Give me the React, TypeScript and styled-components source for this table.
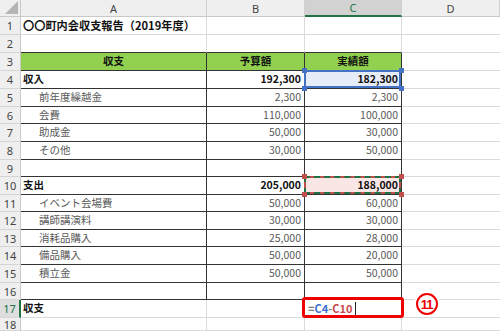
import React from "react";
import styled, { createGlobalStyle, css } from "styled-components";

const GlobalStyle = createGlobalStyle`
  html, body { margin: 0; padding: 0; background: #ffffff; overflow: hidden; }
  body { font-family: "Noto Sans CJK JP", "Noto Sans", sans-serif; }
`;

type Line = "grid" | "table" | "none";
type Mark = "none" | "blue" | "red" | "edit";

const ROW_HEIGHTS = [18, 18, 18, 18, 18, 17, 18, 18, 17, 18, 17, 18, 17, 18, 18, 17, 18, 13];

const Sheet = styled.div`
  display: grid;
  grid-template-columns: 21px 186px 98px 97px 1fr;
  width: 500px;
  height: 331px;
  overflow: hidden;
  background: #fff;
`;

const Corner = styled.div`
  height: 17px;
  background: #efefef;
  border-right: 1px solid #c9c9c9;
  border-bottom: 1px solid #c9c9c9;
  box-sizing: border-box;
  display: flex;
  align-items: flex-end;
  justify-content: flex-end;
  padding: 0 2px 2px 0;
`;

const ColHead = styled.div<{ $active?: boolean }>`
  height: 17px;
  box-sizing: border-box;
  display: flex;
  align-items: center;
  justify-content: center;
  font-family: "Noto Sans", "Open Sans", sans-serif;
  font-size: 11px;
  color: ${(p) => (p.$active ? "#217346" : "#444444")};
  background: ${(p) => (p.$active ? "#d2d2d2" : "#efefef")};
  border-right: 1px solid #d0d0d0;
  border-bottom: ${(p) => (p.$active ? "2px solid #217346" : "1px solid #c9c9c9")};
`;

const RowHead = styled.div<{ $active?: boolean }>`
  box-sizing: border-box;
  display: flex;
  align-items: center;
  justify-content: center;
  font-family: "Noto Sans", "Open Sans", sans-serif;
  font-size: 11px;
  color: ${(p) => (p.$active ? "#217346" : "#444444")};
  background: ${(p) => (p.$active ? "#dedede" : "#efefef")};
  border-bottom: 1px solid #d5d5d5;
  border-right: ${(p) => (p.$active ? "2px solid #217346" : "1px solid #c9c9c9")};
`;

const lineColor = (l: Line) =>
  l === "table" ? "1px solid #333333" : l === "grid" ? "1px solid #dadada" : "none";

const Cell = styled.div<{
  $bb: Line;
  $br: Line;
  $align: "left" | "center" | "right";
  $fill?: string;
  $bold?: boolean;
  $muted?: boolean;
  $indent?: boolean;
  $large?: boolean;
}>`
  position: relative;
  box-sizing: border-box;
  display: flex;
  align-items: center;
  justify-content: ${(p) =>
    p.$align === "right" ? "flex-end" : p.$align === "center" ? "center" : "flex-start"};
  padding: 0 ${(p) => (p.$align === "right" ? "3px" : "2px")} 0
    ${(p) => (p.$indent ? "18px" : "2px")};
  border-bottom: ${(p) => lineColor(p.$bb)};
  border-right: ${(p) => lineColor(p.$br)};
  background: ${(p) => p.$fill || "transparent"};
  font-size: ${(p) => (p.$large ? "11.2px" : "10.5px")};
  font-weight: ${(p) => (p.$bold ? 700 : 400)};
  color: ${(p) => (p.$muted ? "#595959" : "#111111")};
  white-space: nowrap;
  overflow: visible;
`;

const Text = styled.span`
  position: relative;
  z-index: 2;
  line-height: 1;
`;

const Handle = styled.span<{ $c: string; $pos: string }>`
  position: absolute;
  width: 5px;
  height: 5px;
  background: ${(p) => p.$c};
  z-index: 3;
  ${(p) => {
    const [v, h] = p.$pos.split("-");
    return css`
      ${v}: -3px;
      ${h}: -3px;
    `;
  }}
`;

const RefFrame = styled.span<{ $c: string; $dashed?: boolean }>`
  position: absolute;
  inset: -1px 0 0 -1px;
  border: 2px solid ${(p) => p.$c};
  z-index: 1;
  pointer-events: none;
  ${(p) =>
    p.$dashed &&
    css`
      &::after {
        content: "";
        position: absolute;
        inset: -2px;
        border: 2px dashed #1e7145;
      }
    `}
`;

const Annotation = styled.span`
  position: absolute;
  top: -3px;
  left: -3px;
  right: -3px;
  bottom: -1px;
  border: 3px solid #ee0000;
  border-radius: 3px;
  z-index: 4;
`;

const Formula = styled.span`
  position: relative;
  z-index: 2;
  display: flex;
  align-items: center;
  font-size: 11px;
  font-weight: 700;
  line-height: 1;
  padding-left: 1px;
`;

const Tok = styled.span<{ $c: string }>`
  color: ${(p) => p.$c};
`;

const Caret = styled.span`
  display: inline-block;
  width: 1px;
  height: 13px;
  background: #222;
  margin-left: 2px;
`;

const Badge = styled.span`
  position: absolute;
  left: 14px;
  top: -7px;
  width: 22px;
  height: 22px;
  box-sizing: border-box;
  border: 2px solid #ee0000;
  border-radius: 50%;
  background: #fff;
  box-shadow: 0 0 0 2px #fff;
  color: #ee0000;
  font-family: "Liberation Sans", "Noto Sans", sans-serif;
  font-weight: 700;
  font-size: 13px;
  letter-spacing: -1px;
  display: flex;
  align-items: center;
  justify-content: center;
  padding-right: 1px;
  z-index: 5;
`;

type RowKind = "title" | "top" | "header" | "total" | "item" | "blank" | "result" | "plain";

interface RowData {
  kind: RowKind;
  a?: string;
  b?: string;
  c?: string;
  mark?: Mark;
}

const rows: RowData[] = [
  { kind: "title", a: "〇〇町内会収支報告（2019年度）" },
  { kind: "top" },
  { kind: "header", a: "収支", b: "予算額", c: "実績額" },
  { kind: "total", a: "収入", b: "192,300", c: "182,300", mark: "blue" },
  { kind: "item", a: "前年度繰越金", b: "2,300", c: "2,300" },
  { kind: "item", a: "会費", b: "110,000", c: "100,000" },
  { kind: "item", a: "助成金", b: "50,000", c: "30,000" },
  { kind: "item", a: "その他", b: "30,000", c: "50,000" },
  { kind: "blank" },
  { kind: "total", a: "支出", b: "205,000", c: "188,000", mark: "red" },
  { kind: "item", a: "イベント会場費", b: "50,000", c: "60,000" },
  { kind: "item", a: "講師講演料", b: "30,000", c: "30,000" },
  { kind: "item", a: "消耗品購入", b: "25,000", c: "28,000" },
  { kind: "item", a: "備品購入", b: "50,000", c: "20,000" },
  { kind: "item", a: "積立金", b: "50,000", c: "50,000" },
  { kind: "blank" },
  { kind: "result", a: "収支", mark: "edit" },
  { kind: "plain" },
];

const inTable = (k: RowKind) => k === "header" || k === "total" || k === "item" || k === "blank";

const Handles = ({ c }: { c: string }) => (
  <>
    <Handle $c={c} $pos="top-left" />
    <Handle $c={c} $pos="top-right" />
    <Handle $c={c} $pos="bottom-left" />
    <Handle $c={c} $pos="bottom-right" />
  </>
);

const SheetRow = ({ row, index }: { row: RowData; index: number }) => {
  const table = inTable(row.kind);
  const bb: Line = table || row.kind === "top" ? "table" : "grid";
  const br: Line = table ? "table" : "grid";
  const header = row.kind === "header";
  const bold = header || row.kind === "total" || row.kind === "title" || row.kind === "result";
  const muted = row.kind === "item";
  const fill = header ? "#92d050" : undefined;
  const num = index + 1;
  const cFill =
    row.mark === "blue" ? "#e7edf8" : row.mark === "red" ? "#fbe6e6" : fill;

  return (
    <>
      <RowHead $active={row.mark === "edit"}>{num}</RowHead>
      <Cell
        $bb={bb}
        $br={br}
        $align={header ? "center" : "left"}
        $fill={fill}
        $bold={bold}
        $muted={muted}
        $indent={muted}
        $large={row.kind === "title"}
      >
        {row.a && <Text>{row.a}</Text>}
      </Cell>
      <Cell $bb={bb} $br={br} $align={header ? "center" : "right"} $fill={fill} $bold={bold} $muted={muted}>
        {row.b && <Text>{row.b}</Text>}
      </Cell>
      <Cell
        $bb={bb}
        $br={br}
        $align={header ? "center" : row.mark === "edit" ? "left" : "right"}
        $fill={cFill}
        $bold={bold}
        $muted={muted}
      >
        {row.c && <Text>{row.c}</Text>}
        {row.mark === "blue" && (
          <>
            <RefFrame $c="#4472c4" />
            <Handles c="#4472c4" />
          </>
        )}
        {row.mark === "red" && (
          <>
            <RefFrame $c="#c0504d" $dashed />
            <Handles c="#c0504d" />
          </>
        )}
        {row.mark === "edit" && (
          <>
            <Formula>
              <Tok $c="#808080">=</Tok>
              <Tok $c="#3e6fd0">C4</Tok>
              <Tok $c="#808080">-</Tok>
              <Tok $c="#c84a4a">C10</Tok>
              <Caret />
            </Formula>
            <Annotation />
          </>
        )}
      </Cell>
      <Cell $bb="grid" $br="none" $align="left">
        {row.mark === "edit" && <Badge>11</Badge>}
      </Cell>
    </>
  );
};

export default function App() {
  return (
    <>
      <GlobalStyle />
      <Sheet style={{ gridTemplateRows: `17px ${ROW_HEIGHTS.map((h) => `${h}px`).join(" ")}` }}>
        <Corner>
          <svg width="13" height="13" viewBox="0 0 13 13">
            <polygon points="13,0 13,13 0,13" fill="#b4b4b4" />
          </svg>
        </Corner>
        <ColHead>A</ColHead>
        <ColHead>B</ColHead>
        <ColHead $active>C</ColHead>
        <ColHead>D</ColHead>
        {rows.map((r, i) => (
          <SheetRow key={i} row={r} index={i} />
        ))}
      </Sheet>
    </>
  );
}
